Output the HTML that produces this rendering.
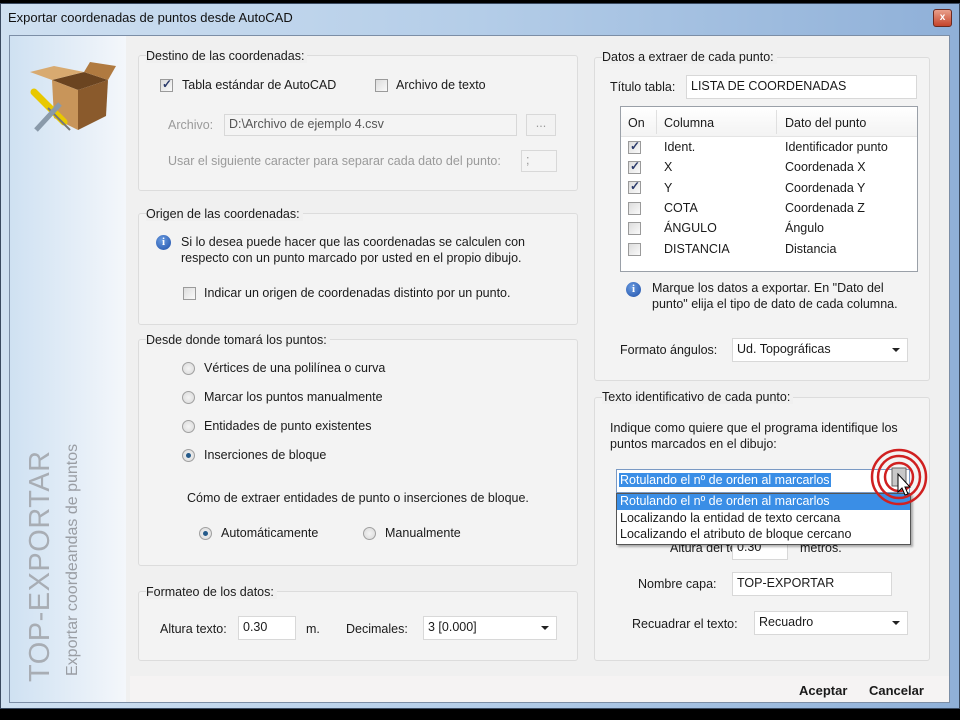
<!DOCTYPE html>
<html><head><meta charset="utf-8"><style>
*{box-sizing:border-box;margin:0;padding:0}
body{width:960px;height:720px;background:#000;position:relative;overflow:hidden;font-family:"Liberation Sans",sans-serif;font-size:12.5px;color:#1a1a1a}
.a{position:absolute;white-space:nowrap}
#frame{position:absolute;left:0;top:3px;width:960px;height:706px;background:linear-gradient(90deg,#cfe0f1,#b4cde8 50%,#8fb0d8);border:1px solid #3a4a60}
#title{left:8px;top:10px;font-size:13px;color:#111}
#close{left:933px;top:9px;width:19px;height:18px;background:linear-gradient(#e9a08c,#c5442a);border:1px solid #6a2a20;border-radius:3px;color:#fff;font-size:10px;text-align:center;line-height:15px;font-weight:bold}
#client{position:absolute;left:9px;top:35px;width:941px;height:668px;background:#f0f0f0;border:1px solid #7c8ea6}
#side{position:absolute;left:10px;top:36px;width:116px;height:666px;background:linear-gradient(90deg,#cfe1f2,#f4f7fb)}
.g{position:absolute;border:1px solid #dcdcdc;border-radius:3px;background:#f3f3f3}
.lg{position:absolute;background:#f0f0f0;padding-right:3px}
.cb{position:absolute;width:13px;height:13px;border:1px solid #9a9a9a;background:linear-gradient(135deg,#dcdcdc,#fafafa)}
.cb.c::after{content:"✓";position:absolute;left:1px;top:-3px;font-size:12px;color:#2a3a6a;font-weight:bold}
.rd{position:absolute;width:13px;height:13px;border-radius:50%;border:1px solid #a0a0a0;background:radial-gradient(#f4f4f4,#d8d8d8)}
.rd.c::after{content:"";position:absolute;left:3px;top:3px;width:5px;height:5px;border-radius:50%;background:#245a8a}
.tb{position:absolute;background:#fff;border:1px solid #d8d8d8;padding:2px 4px}
.dis{color:#9a9a9a}
.info{position:absolute;width:15px;height:15px;border-radius:50%;background:radial-gradient(circle at 40% 35%,#6a9be0,#1e4fa8);color:#fff;font:bold 11px "Liberation Serif",serif;text-align:center;line-height:15px}
.dd::after{content:"";position:absolute;right:7px;top:9px;border-left:4px solid transparent;border-right:4px solid transparent;border-top:4px solid #222}
</style></head><body>
<div id="frame"></div>
<div class="a" id="title">Exportar coordenadas de puntos desde AutoCAD</div>
<div class="a" id="close">x</div>
<div id="client"></div>
<div id="side"></div>
<svg class="a" style="left:24px;top:58px" width="96" height="76" viewBox="0 0 96 76">
<polygon points="28,22 60,14 84,22 54,32" fill="#6b4420"/>
<polygon points="28,22 54,32 54,72 30,60" fill="#c8955a"/>
<polygon points="54,32 84,22 82,58 54,72" fill="#8a5a2c"/>
<polygon points="28,22 6,14 30,8 60,14" fill="#d8aa70"/>
<polygon points="84,22 92,8 66,4 60,14" fill="#b07a40"/>
<line x1="10" y1="34" x2="40" y2="64" stroke="#e8c800" stroke-width="7" stroke-linecap="round"/>
<line x1="24" y1="50" x2="46" y2="72" stroke="#777" stroke-width="2"/>
<path d="M12 72 L36 46" stroke="#8a9aaa" stroke-width="5"/>
</svg>
<div class="a" style="left:24px;top:682px;transform:rotate(-90deg);transform-origin:0 0;font-size:29px;color:#a8adb4;letter-spacing:0.5px">TOP-EXPORTAR</div>
<div class="a" style="left:64px;top:676px;transform:rotate(-90deg);transform-origin:0 0;font-size:16px;color:#9a9ea4">Exportar coordeandas de puntos</div>

<div class="g" style="left:138px;top:55px;width:440px;height:136px"></div>
<div class="a lg" style="left:146px;top:49px">Destino de las coordenadas:</div>
<div class="cb c" style="left:160px;top:79px"></div><div class="a" style="left:182px;top:78px">Tabla estándar de AutoCAD</div>
<div class="cb" style="left:375px;top:79px"></div><div class="a" style="left:396px;top:78px">Archivo de texto</div>
<div class="a dis" style="left:168px;top:118px">Archivo:</div>
<div class="tb dis" style="left:224px;top:114px;width:293px;height:22px;background:#f4f4f4;color:#555">D:\Archivo de ejemplo 4.csv</div>
<div class="tb dis" style="left:526px;top:114px;width:30px;height:22px;background:#f2f2f2;text-align:center;line-height:12px">...</div>
<div class="a dis" style="left:168px;top:154px">Usar el siguiente caracter para separar cada dato del punto:</div>
<div class="tb" style="left:521px;top:150px;width:36px;height:22px;background:#f4f4f4;color:#999">;</div>

<div class="g" style="left:138px;top:213px;width:440px;height:112px"></div>
<div class="a lg" style="left:146px;top:207px">Origen de las coordenadas:</div>
<div class="info" style="left:156px;top:235px">i</div>
<div class="a" style="left:181px;top:234px;line-height:16px">Si lo desea puede hacer que las coordenadas se calculen con<br>respecto con un punto marcado por usted en el propio dibujo.</div>
<div class="cb" style="left:183px;top:287px"></div><div class="a" style="left:204px;top:286px">Indicar un origen de coordenadas distinto por un punto.</div>

<div class="g" style="left:138px;top:339px;width:440px;height:227px"></div>
<div class="a lg" style="left:146px;top:333px">Desde donde tomará los puntos:</div>
<div class="rd" style="left:182px;top:362px"></div><div class="a" style="left:204px;top:361px">Vértices de una polilínea o curva</div>
<div class="rd" style="left:182px;top:391px"></div><div class="a" style="left:204px;top:390px">Marcar los puntos manualmente</div>
<div class="rd" style="left:182px;top:420px"></div><div class="a" style="left:204px;top:419px">Entidades de punto existentes</div>
<div class="rd c" style="left:182px;top:449px"></div><div class="a" style="left:204px;top:448px">Inserciones de bloque</div>
<div class="a" style="left:187px;top:491px">Cómo de extraer entidades de punto o inserciones de bloque.</div>
<div class="rd c" style="left:199px;top:527px"></div><div class="a" style="left:221px;top:526px">Automáticamente</div>
<div class="rd" style="left:363px;top:527px"></div><div class="a" style="left:385px;top:526px">Manualmente</div>

<div class="g" style="left:138px;top:591px;width:440px;height:70px"></div>
<div class="a lg" style="left:146px;top:585px">Formateo de los datos:</div>
<div class="a" style="left:160px;top:622px">Altura texto:</div>
<div class="tb" style="left:238px;top:616px;width:58px;height:24px;line-height:17px">0.30</div>
<div class="a" style="left:306px;top:622px">m.</div>
<div class="a" style="left:346px;top:622px">Decimales:</div>
<div class="tb dd" style="left:423px;top:616px;width:134px;height:24px;line-height:17px">3 [0.000]</div>

<div class="g" style="left:594px;top:57px;width:336px;height:324px"></div>
<div class="a lg" style="left:602px;top:50px">Datos a extraer de cada punto:</div>
<div class="a" style="left:610px;top:80px">Título tabla:</div>
<div class="tb" style="left:686px;top:75px;width:231px;height:24px;line-height:17px">LISTA DE COORDENADAS</div>
<div class="a" style="left:620px;top:106px;width:298px;height:166px;background:#fff;border:1px solid #9aa0a8"></div>
<div class="a" style="left:621px;top:107px;width:296px;height:30px;background:linear-gradient(#fff,#f3f3f3);border-bottom:1px solid #e4e4e4"></div>
<div class="a" style="left:656px;top:110px;width:1px;height:24px;background:#e0e0e0"></div>
<div class="a" style="left:776px;top:110px;width:1px;height:24px;background:#e0e0e0"></div>
<div class="a" style="left:628px;top:116px">On</div><div class="a" style="left:664px;top:116px">Columna</div><div class="a" style="left:785px;top:116px">Dato del punto</div>
<div class="cb c" style="left:628px;top:141px"></div><div class="a" style="left:664px;top:140px">Ident.</div><div class="a" style="left:785px;top:140px">Identificador punto</div>
<div class="cb c" style="left:628px;top:161px"></div><div class="a" style="left:664px;top:160px">X</div><div class="a" style="left:785px;top:160px">Coordenada X</div>
<div class="cb c" style="left:628px;top:181px"></div><div class="a" style="left:664px;top:181px">Y</div><div class="a" style="left:785px;top:181px">Coordenada Y</div>
<div class="cb" style="left:628px;top:202px"></div><div class="a" style="left:664px;top:201px">COTA</div><div class="a" style="left:785px;top:201px">Coordenada Z</div>
<div class="cb" style="left:628px;top:222px"></div><div class="a" style="left:664px;top:221px">ÁNGULO</div><div class="a" style="left:785px;top:221px">Ángulo</div>
<div class="cb" style="left:628px;top:243px"></div><div class="a" style="left:664px;top:242px">DISTANCIA</div><div class="a" style="left:785px;top:242px">Distancia</div>
<div class="info" style="left:626px;top:282px">i</div>
<div class="a" style="left:652px;top:280px;line-height:16px">Marque los datos a exportar. En "Dato del<br>punto" elija el tipo de dato de cada columna.</div>
<div class="a" style="left:620px;top:343px">Formato ángulos:</div>
<div class="tb dd" style="left:732px;top:338px;width:176px;height:24px;line-height:17px">Ud. Topográficas</div>

<div class="g" style="left:594px;top:397px;width:336px;height:264px"></div>
<div class="a lg" style="left:602px;top:390px">Texto identificativo de cada punto:</div>
<div class="a" style="left:610px;top:420px;line-height:16px">Indique como quiere que el programa identifique los<br>puntos marcados en el dibujo:</div>
<div class="a" style="left:670px;top:541px">Altura del texto:</div>
<div class="tb" style="left:732px;top:536px;width:56px;height:24px;line-height:17px">0.30</div>
<div class="a" style="left:800px;top:541px">metros.</div>
<div class="a" style="left:638px;top:577px">Nombre capa:</div>
<div class="tb" style="left:732px;top:572px;width:160px;height:24px;line-height:17px">TOP-EXPORTAR</div>
<div class="a" style="left:632px;top:617px">Recuadrar el texto:</div>
<div class="tb dd" style="left:754px;top:611px;width:154px;height:24px;line-height:17px">Recuadro</div>
<div class="a" style="left:616px;top:469px;width:294px;height:24px;background:#fff;border:1px solid #7a9ac4"></div>
<div class="a" style="left:619px;top:473px;background:#3a8ee6;color:#fff;padding:0 1px">Rotulando el nº de orden al marcarlos</div>
<div class="a" style="left:616px;top:493px;width:295px;height:52px;background:#fff;border:1px solid #555;box-shadow:2px 2px 2px rgba(0,0,0,.3)"></div>
<div class="a" style="left:617px;top:494px;width:293px;height:16px;background:#3a8ee6;color:#fff;padding-left:3px">Rotulando el nº de orden al marcarlos</div>
<div class="a" style="left:620px;top:511px">Localizando la entidad de texto cercana</div>
<div class="a" style="left:620px;top:527px">Localizando el atributo de bloque cercano</div>
<svg class="a" style="left:866px;top:448px" width="64" height="60" viewBox="0 0 64 60">
<circle cx="33" cy="29" r="27" fill="none" stroke="#d02020" stroke-width="2.5"/>
<circle cx="33" cy="29" r="21" fill="none" stroke="#d02020" stroke-width="2.5"/>
<circle cx="33" cy="29" r="14" fill="none" stroke="#d02020" stroke-width="2.5"/>
<rect x="26" y="20" width="14" height="18" fill="#c8c8c8" stroke="#666"/>
<path d="M32 26 L32 44 L36 40 L39 47 L42 46 L39 39 L44 39 Z" fill="#fff" stroke="#000" stroke-width="1"/>
</svg>

<div class="a" style="left:130px;top:676px;width:819px;height:26px;background:#f5f3f3"></div>
<div class="a" style="left:799px;top:683px;font-weight:bold;font-size:13px">Aceptar</div>
<div class="a" style="left:869px;top:683px;font-weight:bold;font-size:13px">Cancelar</div>
</body></html>
